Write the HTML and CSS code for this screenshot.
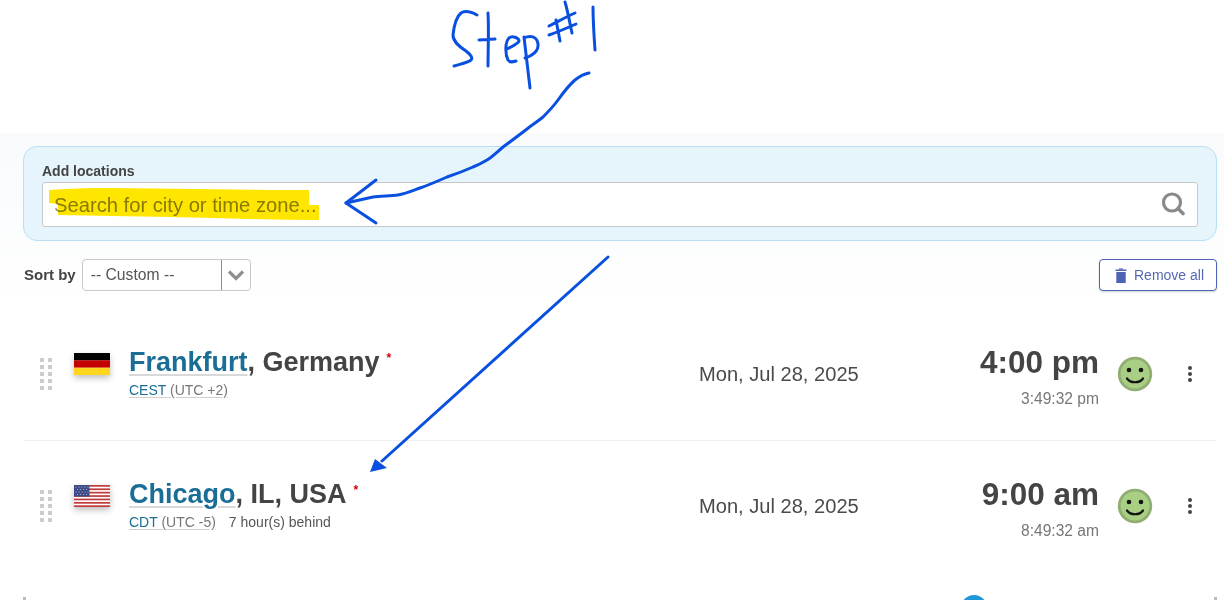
FILE: index.html
```html
<!DOCTYPE html>
<html lang="en">
<head>
<meta charset="utf-8">
<title>Time zone converter</title>
<link rel="stylesheet" href="styles.css">
</head>
<body>
<div class="page">
  <div class="top-space"></div>
  <main class="content">
    <section class="add-panel">
      <label class="add-label" for="search">Add locations</label>
      <div class="search-box">
        <input id="search" class="search-input" type="text" placeholder="Search for city or time zone...">
        <svg class="search-icon" width="26" height="26" viewBox="0 0 26 26"><circle cx="13" cy="10.500" r="8.500" fill="none" stroke="#8a8a8a" stroke-width="3.200"/><path d="M19 16.500l5 5" stroke="#8a8a8a" stroke-width="3.600" stroke-linecap="round"/></svg>
      </div>
    </section>

    <div class="toolbar">
      <div class="sort">
        <span class="sort-label">Sort by</span>
        <div class="select">
          <span class="select-value">-- Custom --</span>
          <span class="select-arrow"><svg width="18" height="12" viewBox="0 0 18 12"><path d="M2 2.500l7 7 7-7" fill="none" stroke="#8f8f8f" stroke-width="3.200"/></svg></span>
        </div>
      </div>
      <button class="remove-all" type="button">
        <svg width="12" height="15" viewBox="0 0 12 15"><path d="M0.500 1.500h11v1.600H0.500zM1.300 4h9.400v11H1.300z" fill="#4f63b4"/><path d="M4 0.400h4v1.200H4z" fill="#4f63b4"/></svg>
        <span>Remove all</span>
      </button>
    </div>

    <article class="row row-first">
      <div class="handle"><i></i><i></i><i></i><i></i><i></i><i></i><i></i><i></i><i></i><i></i></div>
      <svg class="flag" width="36" height="22" viewBox="0 0 36 22"><rect width="36" height="7.300" fill="#000"/><rect y="7.300" width="36" height="7.400" fill="#c40000"/><rect y="14.700" width="36" height="7.300" fill="#ffd51e"/></svg>
      <div class="place">
        <div class="place-name"><a class="city">Frankfurt</a>, Germany<sup class="star">*</sup></div>
        <div class="place-sub"><span class="zone"><span class="zone-code">CEST</span> (UTC +2)</span></div>
      </div>
      <div class="date">Mon, Jul 28, 2025</div>
      <div class="time">
        <div class="time-main">4:00 pm</div>
        <div class="time-live">3:49:32 pm</div>
      </div>
      <svg class="smile" width="36" height="36" viewBox="0 0 36 36"><circle cx="18" cy="18" r="15.800" fill="#a8cf84" stroke="#90ad73" stroke-width="2.800"/><circle cx="12" cy="14" r="2.300" fill="#111"/><circle cx="24" cy="14" r="2.300" fill="#111"/><path d="M10 22.500c3.500 5 12.500 5 16 0" fill="none" stroke="#111" stroke-width="2.200" stroke-linecap="round"/></svg>
      <div class="kebab"><i></i><i></i><i></i></div>
    </article>

    <article class="row">
      <div class="handle"><i></i><i></i><i></i><i></i><i></i><i></i><i></i><i></i><i></i><i></i></div>
      <svg class="flag" width="36" height="22" viewBox="0 0 36 22">
        <rect width="36" height="22" fill="#fff"/>
        <g fill="#c23a3a"><rect width="36" height="1.700"/><rect y="3.400" width="36" height="1.700"/><rect y="6.800" width="36" height="1.700"/><rect y="10.200" width="36" height="1.700"/><rect y="13.600" width="36" height="1.700"/><rect y="17" width="36" height="1.700"/><rect y="20.300" width="36" height="1.700"/></g>
        <rect width="15.500" height="11.500" fill="#3c4a86"/>
        <g fill="#b9c0dc"><circle cx="2" cy="2" r=".6"/><circle cx="5" cy="2" r=".6"/><circle cx="8" cy="2" r=".6"/><circle cx="11" cy="2" r=".6"/><circle cx="14" cy="2" r=".6"/><circle cx="3.500" cy="4.500" r=".6"/><circle cx="6.500" cy="4.500" r=".6"/><circle cx="9.500" cy="4.500" r=".6"/><circle cx="12.500" cy="4.500" r=".6"/><circle cx="2" cy="7" r=".6"/><circle cx="5" cy="7" r=".6"/><circle cx="8" cy="7" r=".6"/><circle cx="11" cy="7" r=".6"/><circle cx="14" cy="7" r=".6"/><circle cx="3.500" cy="9.500" r=".6"/><circle cx="6.500" cy="9.500" r=".6"/><circle cx="9.500" cy="9.500" r=".6"/><circle cx="12.500" cy="9.500" r=".6"/></g>
      </svg>
      <div class="place">
        <div class="place-name"><a class="city">Chicago</a>, IL, USA<sup class="star">*</sup></div>
        <div class="place-sub"><span class="zone"><span class="zone-code">CDT</span> (UTC -5)</span><span class="offset">7 hour(s) behind</span></div>
      </div>
      <div class="date">Mon, Jul 28, 2025</div>
      <div class="time">
        <div class="time-main">9:00 am</div>
        <div class="time-live">8:49:32 am</div>
      </div>
      <svg class="smile" width="36" height="36" viewBox="0 0 36 36"><circle cx="18" cy="18" r="15.800" fill="#a8cf84" stroke="#90ad73" stroke-width="2.800"/><circle cx="12" cy="14" r="2.300" fill="#111"/><circle cx="24" cy="14" r="2.300" fill="#111"/><path d="M10 22.500c3.500 5 12.500 5 16 0" fill="none" stroke="#111" stroke-width="2.200" stroke-linecap="round"/></svg>
      <div class="kebab"><i></i><i></i><i></i></div>
    </article>

    <div class="scale"><i></i><i></i></div>
  </main>

  <span class="scale-knob"></span>

  <svg class="marker-layer" width="1224" height="600" viewBox="0 0 1224 600">
    <path d="M49 190C65 189 80 188 95 188C160 188 240 190 309 190L309 205L319 205L319 220C270 220 220 218 170 217C130 216 95 216 58 215L58 204L49 203Z" fill="#ffe600"/>
  </svg>

  <svg class="ink-layer" width="1224" height="600" viewBox="0 0 1224 600">
    <g fill="none" stroke="#0a50e0" stroke-width="3" stroke-linecap="round" stroke-linejoin="round">
      <path d="M477 15C472 12 465 10 461 13C456 17 454 26 453 35C453 42 460 47 466 51C471 55 473 58 471 60C467 63 460 64 454 66"/>
      <path d="M488 13C489 30 488 50 488 66M479 40L495 39"/>
      <path d="M507 49C511 47 518 44 519 41C519 38 512 35 509 38C505 42 505 54 508 60C510 63 513 62 516 61"/>
      <path d="M524 37C526 55 528 72 530 88M524 38C530 35 537 36 538 44C539 51 532 56 525 58"/>
      <path d="M565 2C568 12 570 24 572 33M556 20L560 41M549 26C557 22 566 17 575 13M549 35C558 32 567 28 576 24"/>
      <path d="M593 7C593 22 594 36 595 50"/>
      <path d="M589 73C584 74 580 76 575 80C568 86 563 93 558 100C553 107 548 112 543 117C537 122 532 125 527 129C518 136 511 141 503 147C497 152 492 157 487 160C482 163 478 165 473 167C464 171 456 174 447 177C438 181 429 185 420 188C412 191 405 194 398 195C390 196 381 196 373 197C364 199 355 201 346 203"/>
      <path d="M376 180L346 203L376 223"/>
      <path d="M608 257L382 461"/>
    </g>
    <path d="M370 472L375 459L387 468Z" fill="#0a50e0"/>
  </svg>
</div>
</body>
</html>
```
FILE: styles.css
```css
* { box-sizing: border-box; }
html, body { margin: 0; padding: 0; height: 600px; overflow: hidden; background: #fff; }
body { font-family: "Liberation Sans", Arial, sans-serif; color: #444; }

.page { position: relative; width: 1224px; height: 600px; overflow: hidden; }
.top-space { height: 133px; }
.content {
  padding: 13px 7px 0 23px;
  background: linear-gradient(#f8fafc 0, #ffffff 175px);
}

.add-panel {
  height: 95px;
  padding: 15px 18px 0;
  background: #e6f4fb;
  border: 1px solid #b9e0f2;
  border-radius: 14px;
  display: flex;
  flex-direction: column;
}
.add-label { font-size: 14px; font-weight: 700; line-height: 19px; color: #444; height: 20px; }
.search-box {
  height: 45px;
  display: flex;
  align-items: center;
  padding: 0 12px 0 11px;
  background: #fff;
  border: 1px solid #c8c8c8;
  border-radius: 3px;
}
.search-input {
  flex: 1;
  border: 0;
  outline: 0;
  padding: 2px 0 0;
  background: transparent;
  font: 20.2px "Liberation Sans", Arial, sans-serif;
  color: #444;
}
.search-input::placeholder { color: #888; opacity: 1; }

.toolbar { display: flex; justify-content: space-between; align-items: center; margin-top: 18px; height: 32px; }
.sort { display: flex; align-items: center; gap: 6px; padding-left: 1px; }
.sort-label { font-size: 15px; font-weight: 700; color: #444; padding-bottom: 2px; }
.select {
  width: 169px;
  height: 32px;
  display: flex;
  align-items: center;
  background: #fff;
  border: 1px solid #c8c8c8;
  border-radius: 4px;
}
.select-value { flex: 1; padding-left: 8px; font-size: 15.7px; color: #555; white-space: nowrap; }
.select-arrow {
  width: 29px;
  height: 100%;
  display: flex;
  align-items: center;
  justify-content: center;
  border-left: 1px solid #8c8c8c;
}
.remove-all {
  width: 118px;
  height: 32px;
  display: flex;
  align-items: center;
  gap: 7px;
  padding: 0 0 0 15px;
  background: #fff;
  border: 1px solid #4f63b4;
  border-radius: 4px;
  box-shadow: 0 1px 2px rgba(0,0,0,.18);
  font: 14px "Liberation Sans", Arial, sans-serif;
  color: #5568b4;
}

.row { height: 130px; display: flex; align-items: center; position: relative; }
.row-first { margin-top: 17px; height: 133px; border-bottom: 1px solid #f0f0f0; }
.handle { width: 12px; margin-left: 17px; display: grid; grid-template-columns: 4px 4px; column-gap: 4px; row-gap: 3px; }
.handle i { display: block; width: 4px; height: 4px; background: #cccccc; }
.flag { margin-left: 22px; margin-top: -20px; filter: drop-shadow(0 3px 3px rgba(0,0,0,.25)); flex: none; }
.place { width: 570px; margin-left: 19px; margin-top: -4px; }
.place-name { font-size: 27px; font-weight: 700; line-height: 30px; color: #444; white-space: nowrap; }
.city {
  color: #1a6e96;
  text-decoration: underline;
  text-decoration-color: #d9d9d9;
  text-decoration-thickness: 2px;
  text-underline-offset: 3px;
}
.star { font-size: 12px; font-weight: 700; color: #d40000; margin-left: 7px; vertical-align: 9px; line-height: 0; }
.place-sub { font-size: 14px; line-height: 16px; margin-top: 5px; color: #444; white-space: nowrap; }
.zone { color: #777; text-decoration: underline; text-decoration-color: #cfcfcf; text-underline-offset: 2px; }
.zone-code { color: #1a6e96; }
.offset { margin-left: 13px; color: #555; }
.date { width: 200px; font-size: 20.1px; color: #4a4a4a; white-space: nowrap; }
.time { width: 200px; text-align: right; margin-top: 4px; }
.time-main { font-size: 31.5px; font-weight: 700; line-height: 34px; color: #444; }
.time-live { font-size: 15.6px; line-height: 18px; margin-top: 11px; color: #777; }
.smile { margin-left: 18px; flex: none; }
.kebab { margin-left: 35px; display: flex; flex-direction: column; gap: 2px; }
.kebab i { display: block; width: 4px; height: 4px; border-radius: 50%; background: #444; }

.scale { display: flex; justify-content: space-between; margin-top: 26px; height: 3px; }
.scale i { display: block; width: 3px; height: 3px; background: #bbb; }
.scale-knob { position: absolute; left: 961px; top: 595px; width: 26px; height: 26px; border-radius: 50%; background: #1f97d9; }

.marker-layer { position: absolute; left: 0; top: 0; mix-blend-mode: multiply; pointer-events: none; }
.ink-layer { position: absolute; left: 0; top: 0; pointer-events: none; }
```
